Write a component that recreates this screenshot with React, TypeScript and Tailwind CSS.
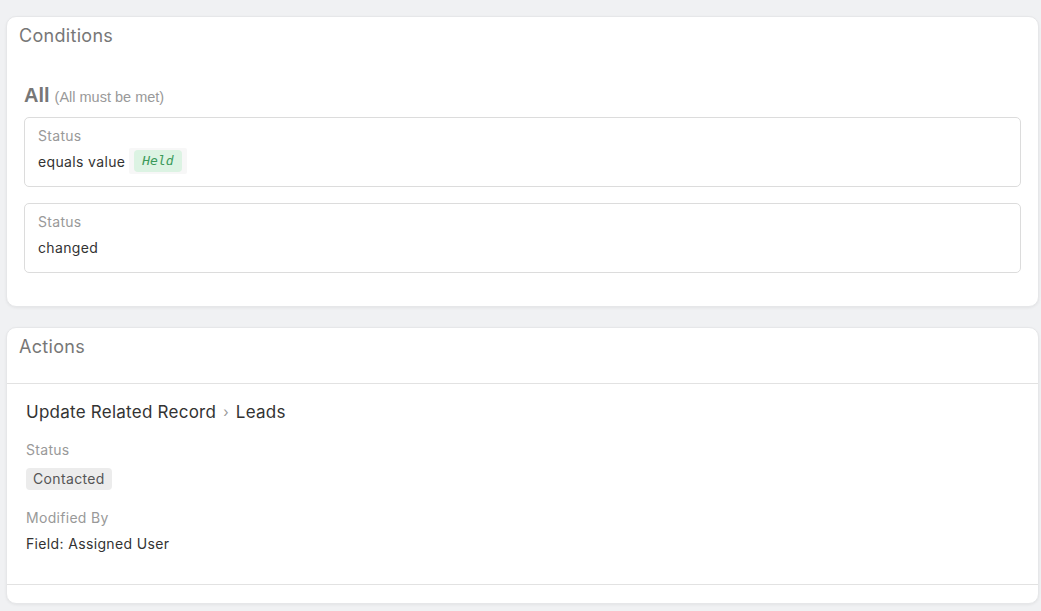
const sans = "font-['Inter','Liberation_Sans',sans-serif]";

function ConditionBox({ label, children }: { label: string; children: React.ReactNode }) {
  return (
    <div className="rounded-[5px] border border-[#dcdcdc] px-[13px] pt-[8px] pb-[12px]">
      <div className="text-[14px] leading-[20px] tracking-[0.3px] text-[#999]">{label}</div>
      <div className="mt-[2px] flex h-[26px] items-center text-[14px] tracking-[0.35px] text-[#333]">{children}</div>
    </div>
  );
}

export default function App() {
  return (
    <div className={`${sans} min-h-screen bg-[#f0f1f3] pt-[16px] pl-[6px] pr-[2px] pb-[8px]`}>
      <div className="flex flex-col gap-[20px]">
        {/* Conditions */}
        <section className="rounded-[10px] border border-[#e6e7e9] bg-white shadow-[0_1px_3px_rgba(0,0,0,0.06)]">
          <div className="h-[50px] px-[12px] pt-[6px]">
            <h2 className="text-[18px] leading-[26px] tracking-[0.3px] text-[#777]">Conditions</h2>
          </div>
          <div className="px-[17px] pt-[16px] pb-[33px]">
            <div className="flex h-[24px] items-baseline gap-[5px] font-['Liberation_Sans',Arial,sans-serif]">
              <span className="text-[20px] leading-[24px] font-bold text-[#777]">All</span>
              <span className="text-[14.5px] leading-[24px] text-[#999]">(All must be met)</span>
            </div>
            <div className="mt-[10px] flex flex-col gap-[16px]">
              <ConditionBox label="Status">
                <span>equals value</span>
                <span className="ml-[4px] rounded-[2px] bg-[#f7f7f7] px-[5px] py-[2px]">
                  <span className="block rounded-[4px] bg-[#dcf3e3] px-[8px] font-['DejaVu_Sans_Mono',monospace] text-[13px] leading-[22px] tracking-normal italic text-[#3a9a5a]">
                    Held
                  </span>
                </span>
              </ConditionBox>
              <ConditionBox label="Status">
                <span>changed</span>
              </ConditionBox>
            </div>
          </div>
        </section>

        {/* Actions */}
        <section className="rounded-[10px] border border-[#e6e7e9] bg-white shadow-[0_1px_3px_rgba(0,0,0,0.06)]">
          <div className="h-[56px] border-b border-[#e2e2e2] px-[12px] pt-[6px]">
            <h2 className="text-[18px] leading-[26px] tracking-[0.3px] text-[#777]">Actions</h2>
          </div>
          <div className="border-b border-[#e2e2e2] px-[19px] pt-[15px] pb-[30px]">
            <div className="flex items-center text-[17px] leading-[26px] tracking-[0.25px] text-[#333]">
              <span>Update Related Record</span>
              <span className="mx-[7px] text-[14px] text-[#999]">›</span>
              <span>Leads</span>
            </div>
            <div className="mt-[15px] text-[14px] leading-[20px] tracking-[0.3px] text-[#999]">Status</div>
            <div className="mt-[6px]">
              <span className="inline-block rounded-[4px] bg-[#ececec] px-[7px] text-[14px] leading-[22px] tracking-[0.35px] text-[#555]">
                Contacted
              </span>
            </div>
            <div className="mt-[18px] text-[14px] leading-[20px] tracking-[0.3px] text-[#999]">Modified By</div>
            <div className="mt-[6px] text-[14px] leading-[20px] tracking-[0.35px] text-[#333]">Field: Assigned User</div>
          </div>
          <div className="h-[18px]" />
        </section>
      </div>
    </div>
  );
}
